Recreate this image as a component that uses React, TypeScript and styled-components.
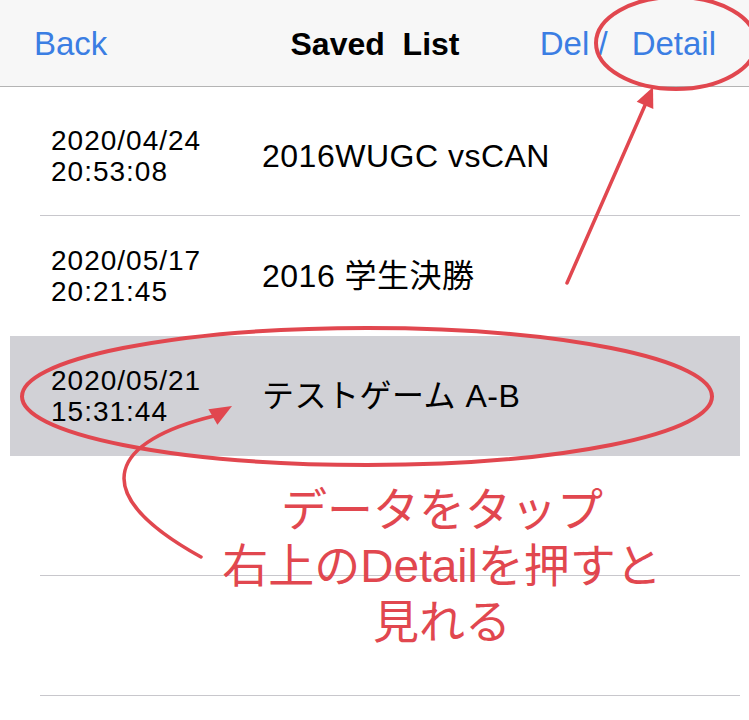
import styled, { createGlobalStyle } from 'styled-components';

const GlobalStyle = createGlobalStyle`
  html, body {
    margin: 0;
    padding: 0;
    background: #ffffff;
  }
  body {
    font-family: "Liberation Sans", "Noto Sans CJK JP", sans-serif;
    color: #000000;
  }
`;

const RED = '#e1474f';

const Screen = styled.div`
  position: relative;
  width: 749px;
  height: 720px;
  overflow: hidden;
  background: #ffffff;
`;

const NavBar = styled.header`
  display: grid;
  grid-template-columns: 1fr auto 1fr;
  align-items: start;
  box-sizing: border-box;
  height: 87px;
  padding: 25px 33px 0 34px;
  background: #f7f7f7;
  border-bottom: 1px solid #b4b4b4;
  font-size: 33px;
  line-height: 38px;
`;

const NavButton = styled.span`
  color: #3b7ee3;
  white-space: pre;
`;

const NavTitle = styled.h1`
  margin: 0;
  font-size: 32px;
  line-height: 38px;
  font-weight: bold;
  white-space: pre;
`;

const NavActions = styled.div`
  justify-self: end;
  display: flex;
  gap: 24px;
`;

const List = styled.main`
  padding: 9px 9px 0 10px;
`;

const Row = styled.div<{ $selected?: boolean; $noLine?: boolean }>`
  position: relative;
  display: flex;
  align-items: center;
  height: 120px;
  background: ${(p) => (p.$selected ? '#d1d1d6' : 'transparent')};

  &::after {
    content: '';
    display: ${(p) => (p.$noLine ? 'none' : 'block')};
    position: absolute;
    left: 30px;
    right: 0;
    bottom: 0;
    height: 1px;
    background: #c8c7cc;
  }
`;

const DateCell = styled.div`
  box-sizing: border-box;
  flex: 0 0 252px;
  padding-left: 41px;
  font-size: 28px;
  line-height: 31px;
  letter-spacing: 1px;
`;

const TitleCell = styled.div`
  font-size: 32px;
  line-height: 40px;
  letter-spacing: 0.5px;
  white-space: pre;
`;

const Callout = styled.div`
  position: absolute;
  top: 482px;
  left: 142px;
  width: 600px;
  text-align: center;
  color: ${RED};
  font-size: 46px;
  line-height: 56px;
  white-space: nowrap;
`;

const Marks = styled.svg`
  position: absolute;
  inset: 0;
  pointer-events: none;
`;

const games = [
  { date: '2020/04/24', time: '20:53:08', title: '2016WUGC vsCAN' },
  { date: '2020/05/17', time: '20:21:45', title: '2016 学生決勝' },
  { date: '2020/05/21', time: '15:31:44', title: 'テストゲーム A-B', selected: true },
  { date: '', time: '', title: '' },
  { date: '', time: '', title: '' },
];

export default function App() {
  return (
    <Screen>
      <GlobalStyle />
      <NavBar>
        <NavButton>Back</NavButton>
        <NavTitle>{'Saved  List'}</NavTitle>
        <NavActions>
          <NavButton>Del /</NavButton>
          <NavButton>Detail</NavButton>
        </NavActions>
      </NavBar>

      <List>
        {games.map((g, i) => (
          <Row
            key={i}
            $selected={g.selected}
            $noLine={g.selected || games[i + 1]?.selected}
          >
            {g.date && (
              <>
                <DateCell>
                  {g.date}
                  <br />
                  {g.time}
                </DateCell>
                <TitleCell>{g.title}</TitleCell>
              </>
            )}
          </Row>
        ))}
      </List>

      <Marks width="749" height="720" viewBox="0 0 749 720">
        <g fill="none" stroke={RED} strokeLinecap="round">
          <ellipse cx="676" cy="43" rx="80" ry="46" strokeWidth="4" />
          <ellipse cx="367" cy="396.5" rx="345" ry="68.5" strokeWidth="4" />
          <line x1="567" y1="283" x2="646" y2="103" strokeWidth="3.5" />
          <path d="M201 557 C80 490 115 440 214 416" strokeWidth="3.5" />
        </g>
        <g fill={RED}>
          <polygon points="653,87 636.7,101.8 653.3,109" />
          <polygon points="232,406 208.4,409.2 217.4,424.8" />
        </g>
      </Marks>

      <Callout>
        <div>データをタップ</div>
        <div>右上のDetailを押すと</div>
        <div>見れる</div>
      </Callout>
    </Screen>
  );
}
